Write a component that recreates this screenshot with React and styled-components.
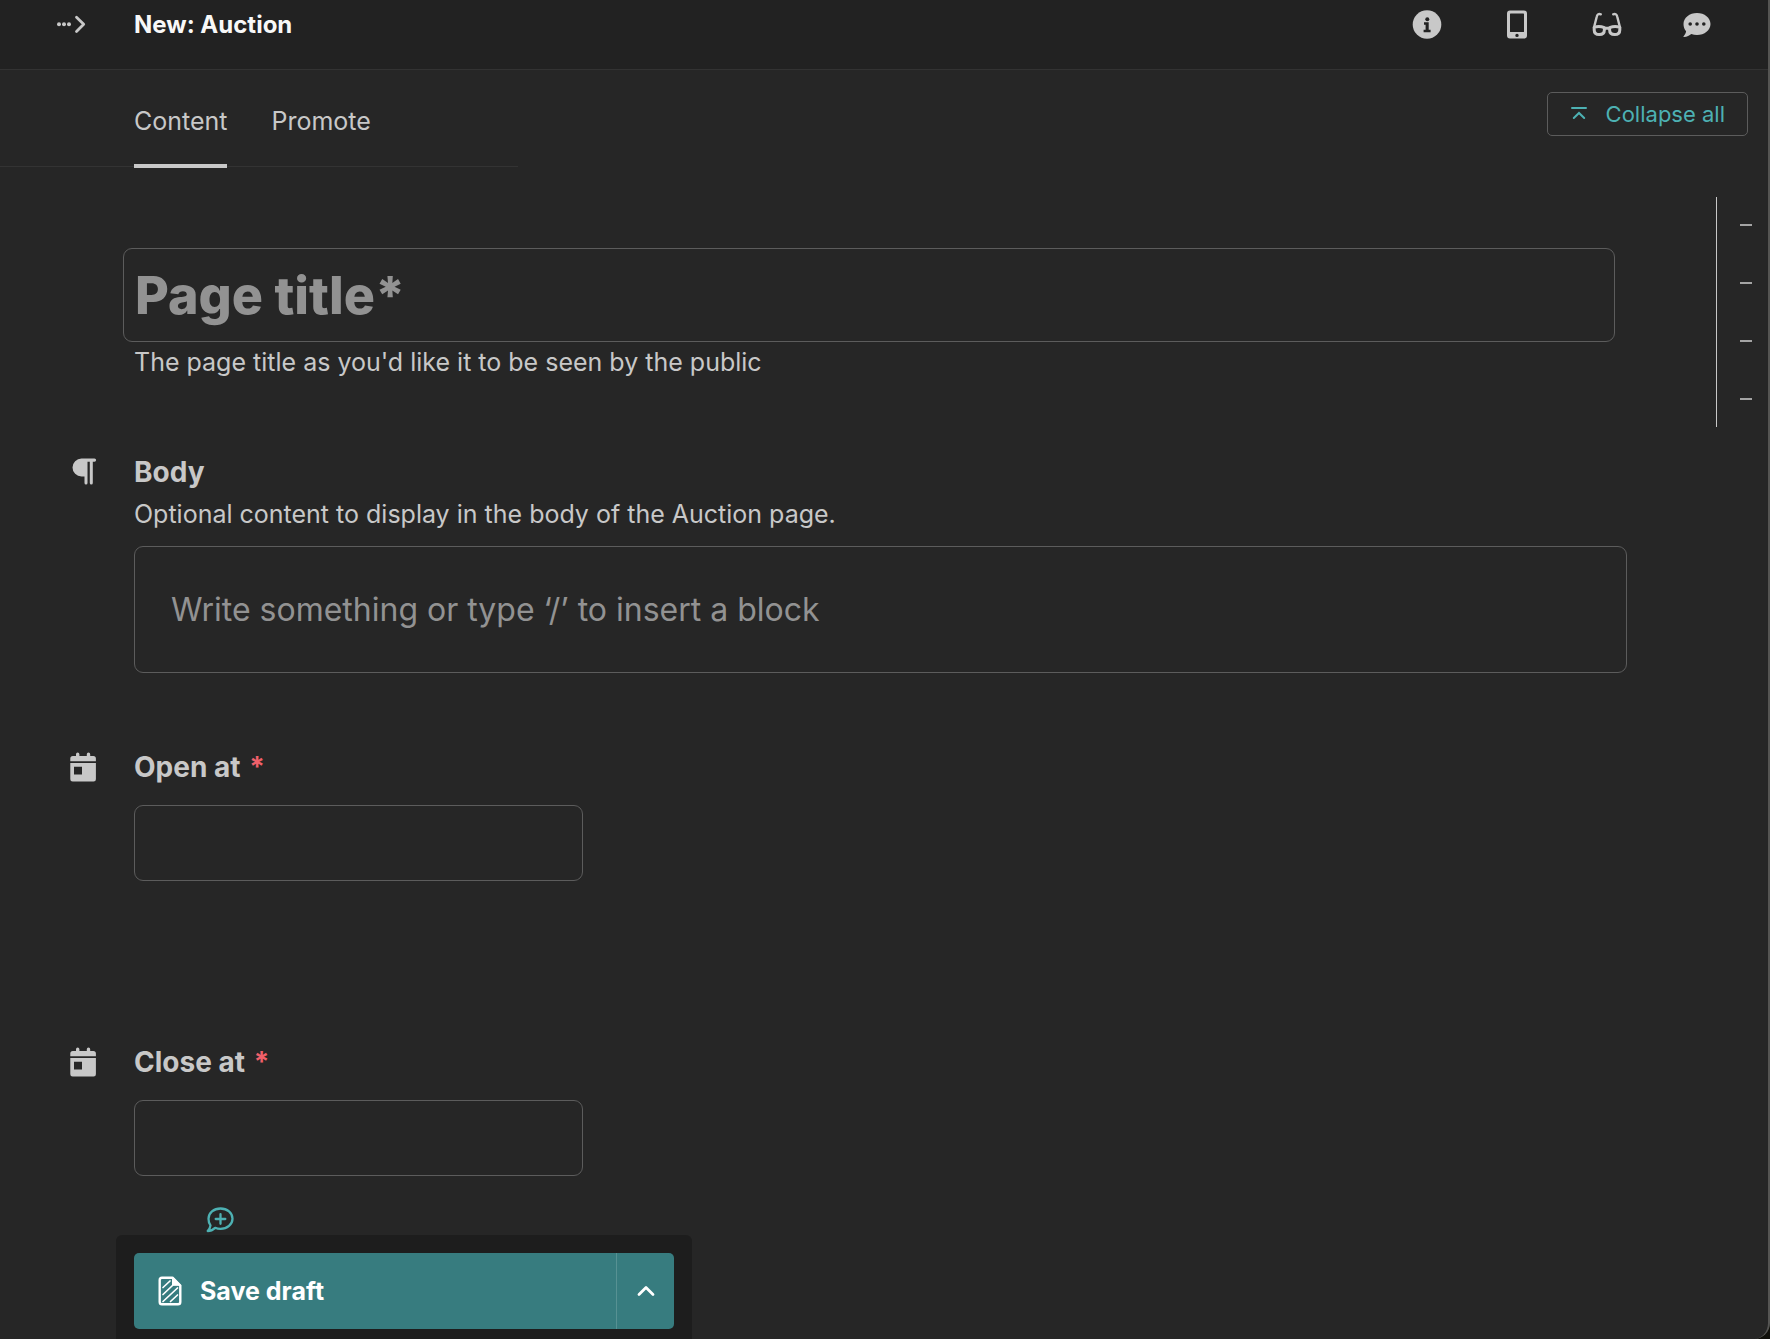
import React from "react";
import styled, { createGlobalStyle, css } from "styled-components";

const color = {
  page: "#262626",
  backdrop: "#11110c",
  header: "#222222",
  footer: "#1d1d1d",
  furrow: "#333333",
  outline: "#5c5c5c",
  text: "#c8c8c8",
  placeholder: "#929292",
  heading: "#f8f8f8",
  teal: "#4db1b3",
  button: "#377c7f",
  critical: "#f0606a",
};

const GlobalStyle = createGlobalStyle`
  *, *::before, *::after { box-sizing: border-box; }
  html { background: ${color.backdrop}; }
  body {
    margin: 0;
    color: ${color.text};
    font-family: Inter, "Liberation Sans", sans-serif;
    font-size: 25px;
    line-height: 32px;
  }
  button, input, textarea { font: inherit; color: inherit; margin: 0; }
  svg { display: block; }
`;

const Page = styled.div`
  display: flex;
  flex-direction: column;
  min-height: 100vh;
  background: ${color.page};
  border-right: 2px solid #555553;
  border-bottom-right-radius: 16px;
`;

const Header = styled.header`
  display: flex;
  align-items: flex-start;
  justify-content: space-between;
  height: 70px;
  padding: 9px 55px 0 55px;
  background: ${color.header};
  border-bottom: 1px solid ${color.furrow};
`;

const HeaderLead = styled.div`
  display: flex;
  align-items: center;
  gap: 47px;
`;

const Title = styled.h1`
  margin: 0;
  font-size: 24px;
  line-height: 32px;
  font-weight: 700;
  color: ${color.heading};
`;

const HeaderActions = styled.div`
  display: flex;
  gap: 58px;
`;

const IconButton = styled.button`
  display: grid;
  place-items: center;
  width: 32px;
  height: 32px;
  padding: 0;
  border: 0;
  background: none;
`;

const TabBar = styled.div`
  display: flex;
  align-items: flex-start;
  justify-content: space-between;
  padding-right: 20px;
`;

const Tabs = styled.nav`
  display: flex;
  gap: 44px;
  width: 518px;
  height: 97px;
  padding-left: 134px;
  border-bottom: 1px solid ${color.furrow};
`;

const Tab = styled.a`
  height: 98px;
  padding-top: 35px;
  color: ${color.text};
  text-decoration: none;
  border-bottom: 4px solid ${(p) => (p.$active ? color.text : "transparent")};
`;

const CollapseButton = styled.button`
  display: flex;
  align-items: center;
  gap: 18px;
  height: 44px;
  margin-top: 22px;
  padding: 0 22px;
  border: 1px solid ${color.outline};
  border-radius: 5px;
  background: none;
  && { color: ${color.teal}; font-size: 22px; }
`;

const Main = styled.div`
  display: flex;
  justify-content: space-between;
  align-items: flex-start;
  padding: 30px 15px 0 0;
`;

const Form = styled.form`
  flex: 1;
  max-width: 1627px;
  padding-top: 51px;
`;

const TitleField = styled.div`
  padding: 0 12px 0 123px;
`;

const outlined = css`
  display: block;
  width: 100%;
  border: 1px solid ${color.outline};
  border-radius: 9px;
  background: ${color.page};
  outline: none;
  &::placeholder { color: ${color.placeholder}; opacity: 1; }
`;

const TitleInput = styled.input`
  ${outlined}
  && { font-size: 52px; font-weight: 800; }
  height: 94px;
  padding: 0 11px;
`;

const Help = styled.p`
  margin: 0;
  color: ${color.text};
`;

const TitleHelp = styled(Help)`
  padding: 4px 0 0 11px;
`;

const SectionHelp = styled(Help)`
  padding-top: 8px;
`;

const Section = styled.section`
  display: grid;
  grid-template-columns: 64px 1fr;
  padding-left: 70px;
  margin-top: ${(p) => p.$gap}px;
`;

const SectionIcon = styled.div`
  padding-top: 3px;
`;

const Label = styled.label`
  display: block;
  font-size: 28px;
  line-height: 36px;
  font-weight: 700;
`;

const Required = styled.span`
  margin-left: 2px;
  color: ${color.critical};
`;

const Editor = styled.textarea`
  ${outlined}
  height: 127px;
  margin-top: 16px;
  padding: 41px 36px;
  && { font-size: 32px; line-height: 44px; }
  resize: none;
  overflow: hidden;
`;

const DateInput = styled.input`
  ${outlined}
  width: 449px;
  height: 76px;
  margin-top: 20px;
  padding: 0 24px;
`;

const CommentButton = styled(IconButton)`
  margin: 28px 0 0 70px;
`;

const Minimap = styled.ol`
  display: flex;
  flex-direction: column;
  gap: 26px;
  width: 37px;
  height: 230px;
  margin: 0;
  padding: 12px 0 0 23px;
  border-left: 1px solid ${color.text};
  list-style: none;
`;

const MinimapLink = styled.a`
  display: flex;
  align-items: center;
  height: 32px;
  &::before {
    content: "";
    width: 12px;
    height: 2px;
    background: #a4a4a4;
  }
`;

const Footer = styled.footer`
  position: fixed;
  left: 116px;
  bottom: 0;
  display: flex;
  width: 576px;
  height: 104px;
  padding: 18px 18px 10px;
  background: ${color.footer};
  border-radius: 6px 6px 0 0;
`;

const SaveButton = styled.button`
  display: flex;
  flex: 1;
  align-items: center;
  gap: 18px;
  padding: 0 24px;
  border: 0;
  border-right: 1px solid #579193;
  border-radius: 5px 0 0 5px;
  background: ${color.button};
  && { color: #fff; font-weight: 700; }
`;

const MoreButton = styled.button`
  display: grid;
  place-items: center;
  width: 57px;
  padding: 0;
  border: 0;
  border-radius: 0 5px 5px 0;
  background: ${color.button};
  && { color: #fff; }
`;

const ExpandIcon = () => (
  <svg width="32" height="32" viewBox="0 0 32 32" fill="none" aria-hidden="true">
    <circle cx="4" cy="15.300" r="2" fill={color.text} />
    <circle cx="9" cy="15.300" r="2" fill={color.text} />
    <circle cx="14" cy="15.300" r="2" fill={color.text} />
    <path d="M21.500 8.200l7.200 7.100-7.200 7.200" stroke={color.text} strokeWidth="2.800" strokeLinecap="round" strokeLinejoin="round" />
  </svg>
);

const InfoIcon = () => (
  <svg width="30" height="30" viewBox="0 0 30 30" aria-hidden="true">
    <circle cx="15" cy="14.500" r="14.300" fill={color.text} />
    <circle cx="15.300" cy="9.200" r="2" fill={color.header} />
    <path d="M12 12.300h4.700v7.500h1.900v2.500h-7v-2.500h2v-5H12z" fill={color.header} />
  </svg>
);

const MobileIcon = () => (
  <svg width="22" height="30" viewBox="0 0 22 30" aria-hidden="true">
    <path fillRule="evenodd" fill={color.text} d="M4 .5h14a3 3 0 0 1 3 3v22a3 3 0 0 1-3 3H4a3 3 0 0 1-3-3V3.500a3 3 0 0 1 3-3zm.6 3a.6.6 0 0 0-.6.6v17.300a.6.6 0 0 0 .6.6h12.800a.6.6 0 0 0 .6-.6V4.100a.6.6 0 0 0-.6-.6zM11 23.700a1.700 1.700 0 1 0 0 3.400 1.700 1.700 0 0 0 0-3.400z" />
  </svg>
);

const GlassesIcon = () => (
  <svg width="30" height="26" viewBox="0 0 30 26" fill="none" stroke={color.text} strokeWidth="2.400" strokeLinecap="round" strokeLinejoin="round" aria-hidden="true">
    <path d="M2 15.500L4.800 4.500c.5-2.200 2-3 4-2.200M28 15.500L25.200 4.500c-.5-2.200-2-3-4-2.200" />
    <path strokeWidth="3" d="M2.200 15.300c3-1.200 7-1 10.200.3v2.200c0 3.200-2 4.800-5.100 4.800S2.200 21 2.200 18zM27.800 15.300c-3-1.200-7-1-10.200.3v2.200c0 3.200 2 4.800 5.100 4.800S27.800 21 27.800 18zM12.400 16.200h5.200" />
  </svg>
);

const CommentIcon = () => (
  <svg width="28" height="26" viewBox="0 0 28 26" aria-hidden="true">
    <path fill={color.text} d="M14 1c7.500 0 13.500 4.900 13.500 11S21.500 23 14 23c-2 0-4-.4-5.700-1C6.500 23.500 4 25 .9 25c-.5 0-.6-.5-.3-.8 1.400-1.600 2.300-3.300 2.500-5C1.400 17.300.5 14.700.5 12 .5 5.900 6.500 1 14 1z" />
    <circle cx="7.200" cy="12" r="1.800" fill={color.header} />
    <circle cx="14" cy="12" r="1.800" fill={color.header} />
    <circle cx="20.800" cy="12" r="1.800" fill={color.header} />
  </svg>
);

const CollapseIcon = () => (
  <svg width="18" height="16" viewBox="0 0 18 16" fill="none" stroke="currentColor" strokeWidth="2" aria-hidden="true">
    <path d="M2 2h14M3.800 12L9 7l5.200 5" strokeLinecap="round" />
  </svg>
);

const PilcrowIcon = () => (
  <svg width="28" height="28" viewBox="0 0 28 28" aria-hidden="true">
    <path fill={color.text} d="M11.500 1.500H24.500a1.600 1.600 0 0 1 0 3.200H22.800V26a1.500 1.500 0 0 1-3 0V4.700H17.500V26a1.500 1.500 0 0 1-3 0V19.500h-3a9 9 0 0 1 0-18z" />
  </svg>
);

const DateIcon = () => (
  <svg width="28" height="30" viewBox="0 0 28 30" aria-hidden="true">
    <path fill={color.text} d="M.3 9.200V6.500A2.500 2.500 0 0 1 2.800 4H6V2.200a1.700 1.700 0 0 1 3.400 0V4h7.400V2.200a1.700 1.700 0 0 1 3.400 0V4h3.200A2.500 2.500 0 0 1 25.900 6.500v2.700z" />
    <path fillRule="evenodd" fill={color.text} d="M.3 11h25.600v16.200a2.300 2.300 0 0 1-2.300 2.300h-21A2.300 2.300 0 0 1 .3 27.200zM4 14.800v7.700h8v-7.700z" />
  </svg>
);

const AddCommentIcon = () => (
  <svg width="30" height="28" viewBox="0 0 30 28" fill="none" stroke={color.teal} strokeWidth="2.300" strokeLinecap="round" strokeLinejoin="round" aria-hidden="true">
    <path d="M15.500 2.500c6.700 0 12 4.500 12 10.200s-5.300 10.200-12 10.200c-2 0-3.800-.4-5.400-1.100C8.200 23.600 5.800 25 2.700 25c1.500-1.600 2.600-3.500 2.800-5.600C4.100 17.600 3.500 15.200 3.500 12.700c0-5.700 5.300-10.200 12-10.200zM15.500 8.200v9.600M10.700 13h9.600" />
  </svg>
);

const DraftIcon = () => (
  <svg width="24" height="30" viewBox="0 0 24 30" fill="none" stroke="#fff" strokeLinecap="round" strokeLinejoin="round" aria-hidden="true">
    <path strokeWidth="2.400" d="M14.500 1.700H4A2.300 2.300 0 0 0 1.700 4v22A2.300 2.300 0 0 0 4 28.300h16a2.300 2.300 0 0 0 2.300-2.300V9.500z" />
    <path fill="#fff" strokeWidth="1" d="M14.500 1.500v7.800h7.800z" />
    <path strokeWidth="1.700" d="M5 11.500l7-6.500M5 18.500L14.500 9.500M5 25.500L19.500 12M12.500 25.500l7-6.500" />
  </svg>
);

const ChevronUpIcon = () => (
  <svg width="20" height="14" viewBox="0 0 20 14" fill="none" stroke="#fff" strokeWidth="2.800" strokeLinecap="round" strokeLinejoin="round" aria-hidden="true">
    <path d="M3 10.500l7-7 7 7" />
  </svg>
);

const DateSection = ({ id, label, gap }) => (
  <Section $gap={gap}>
    <SectionIcon><DateIcon /></SectionIcon>
    <div>
      <Label htmlFor={id}>{label} <Required>*</Required></Label>
      <DateInput id={id} type="text" />
    </div>
  </Section>
);

export default function App() {
  return (
    <Page>
      <GlobalStyle />
      <Header>
        <HeaderLead>
          <IconButton type="button" aria-label="Toggle breadcrumbs"><ExpandIcon /></IconButton>
          <Title>New: Auction</Title>
        </HeaderLead>
        <HeaderActions>
          <IconButton type="button" aria-label="Info"><InfoIcon /></IconButton>
          <IconButton type="button" aria-label="Preview"><MobileIcon /></IconButton>
          <IconButton type="button" aria-label="Checks"><GlassesIcon /></IconButton>
          <IconButton type="button" aria-label="Comments"><CommentIcon /></IconButton>
        </HeaderActions>
      </Header>
      <TabBar>
        <Tabs aria-label="Page sections">
          <Tab href="#content" $active aria-current="page">Content</Tab>
          <Tab href="#promote">Promote</Tab>
        </Tabs>
        <CollapseButton type="button"><CollapseIcon />Collapse all</CollapseButton>
      </TabBar>
      <Main>
        <Form>
          <TitleField>
            <TitleInput type="text" placeholder="Page title*" aria-label="Page title" aria-describedby="title-help" />
            <TitleHelp id="title-help">The page title as you'd like it to be seen by the public</TitleHelp>
          </TitleField>
          <Section $gap={76}>
            <SectionIcon><PilcrowIcon /></SectionIcon>
            <div>
              <Label htmlFor="body">Body</Label>
              <SectionHelp>Optional content to display in the body of the Auction page.</SectionHelp>
              <Editor id="body" placeholder="Write something or type ‘/’ to insert a block" />
            </div>
          </Section>
          <DateSection id="open-at" label="Open at" gap={76} />
          <DateSection id="close-at" label="Close at" gap={163} />
          <Section $gap={0}>
            <span />
            <CommentButton type="button" aria-label="Add comment"><AddCommentIcon /></CommentButton>
          </Section>
        </Form>
        <Minimap>
          {["Title", "Body", "Open at", "Close at"].map((name) => (
            <li key={name}><MinimapLink href={`#${name}`} aria-label={name} /></li>
          ))}
        </Minimap>
      </Main>
      <Footer>
        <SaveButton type="button"><DraftIcon />Save draft</SaveButton>
        <MoreButton type="button" aria-label="More actions"><ChevronUpIcon /></MoreButton>
      </Footer>
    </Page>
  );
}
